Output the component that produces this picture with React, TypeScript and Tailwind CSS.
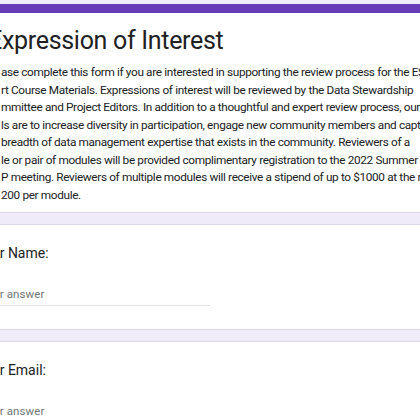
export default function App() {
  const body = [
    "ase complete this form if you are interested in supporting the review process for the ESIP",
    "rt Course Materials. Expressions of interest will be reviewed by the Data Stewardship",
    "mmittee and Project Editors. In addition to a thoughtful and expert review process, our",
    "ls are to increase diversity in participation, engage new community members and capture",
    "breadth of data management expertise that exists in the community. Reviewers of a",
    "le or pair of modules will be provided complimentary registration to the 2022 Summer",
    "P meeting. Reviewers of multiple modules will receive a stipend of up to $1000 at the rate",
    "200 per module.",
  ];

  return (
    <div className="w-[420px] h-[420px] overflow-hidden bg-[#f0ebf8] pt-[4px] font-['Roboto',sans-serif]">
      {/* --- Шапка формы --- */}
      <div className="h-[209px] bg-white border-b border-[#dcd6e6]">
        <div className="h-[9px] bg-[#673ab7]" />
        <div className="pt-[12px]">
          <h1 className="ml-[-12px] text-[25px] leading-[32px] tracking-[-0.3px] text-[#202124] whitespace-nowrap">
            Expression of Interest
          </h1>
          <div className="mt-[7px] text-[11.8px] leading-[17.5px] tracking-[-0.35px] text-[#202124] whitespace-nowrap">
            {body.map((line, i) => (
              <div key={i} className="pl-[1px]">
                {line}
              </div>
            ))}
          </div>
        </div>
      </div>

      {/* --- Вопрос: имя --- */}
      <div className="mt-[11px] h-[106px] bg-white border-y border-[#dcd6e6] pt-[18px]">
        <div className="ml-[-24px] text-[14px] leading-[20px] text-[#202124] whitespace-nowrap">
          Your Name:
        </div>
        <div className="mt-[23px] w-[210px] border-b border-[#e0e0e0] pb-[3px]">
          <div className="ml-[-20px] text-[11.5px] leading-[16px] tracking-[0.1px] text-[#70757a] whitespace-nowrap">
            Your answer
          </div>
        </div>
      </div>

      {/* --- Вопрос: email --- */}
      <div className="mt-[11px] h-[120px] bg-white border-t border-[#dcd6e6] pt-[18px]">
        <div className="ml-[-24px] text-[14px] leading-[20px] text-[#202124] whitespace-nowrap">
          Your Email:
        </div>
        <div className="mt-[23px] w-[210px] border-b border-[#e0e0e0] pb-[3px]">
          <div className="ml-[-20px] text-[11.5px] leading-[16px] tracking-[0.1px] text-[#70757a] whitespace-nowrap">
            Your answer
          </div>
        </div>
      </div>
    </div>
  );
}
